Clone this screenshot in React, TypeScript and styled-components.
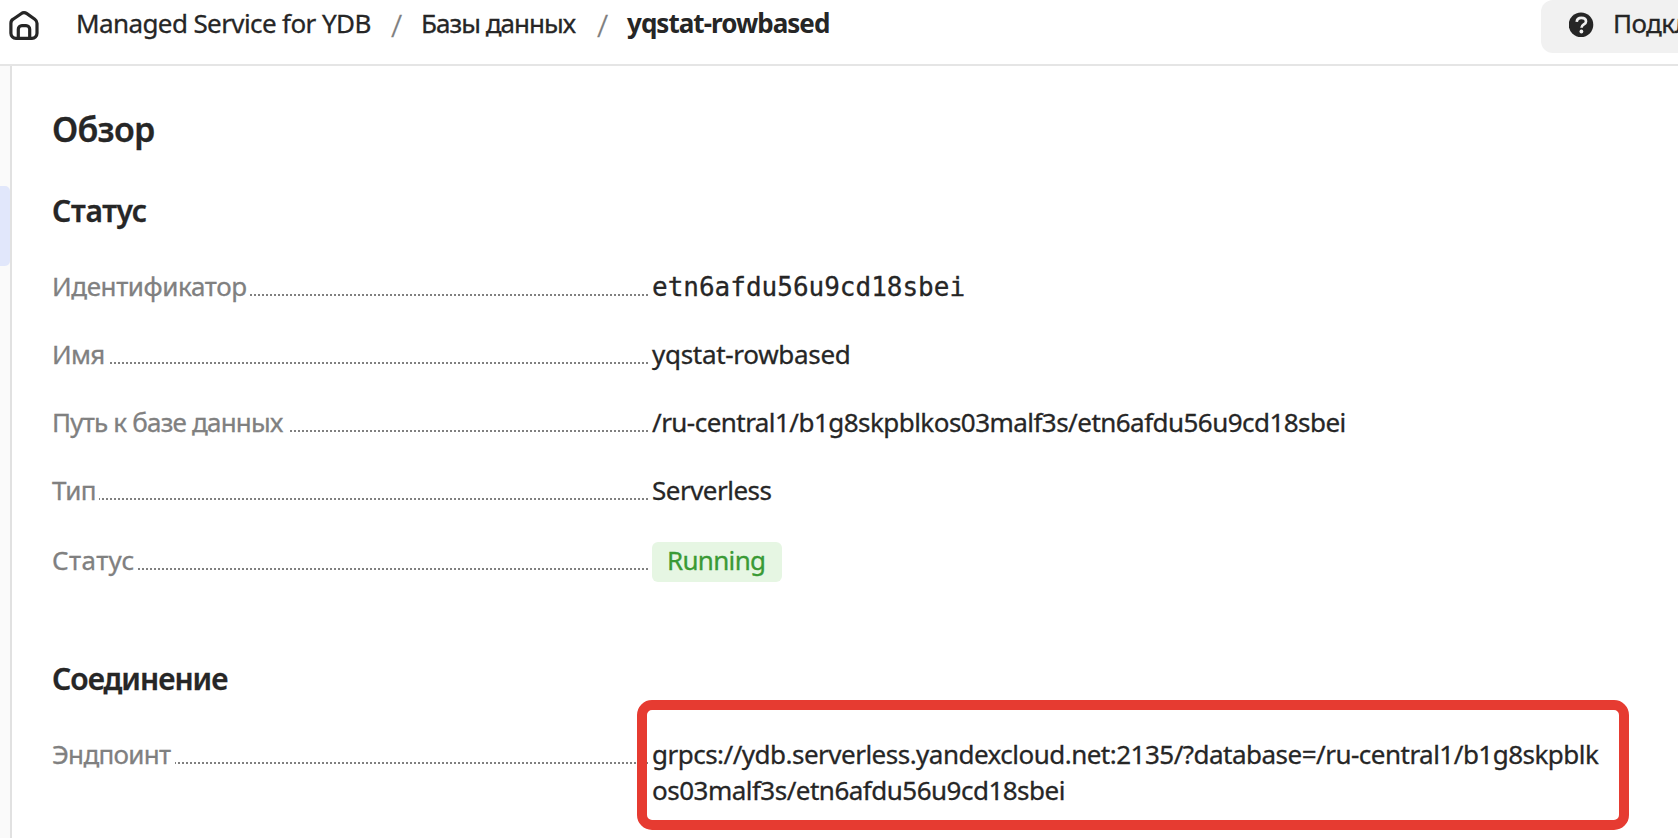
import React from 'react';
import styled, { createGlobalStyle } from 'styled-components';

const GlobalStyle = createGlobalStyle`
  * { box-sizing: border-box; }
  body {
    margin: 0;
    overflow: hidden;
    background: #fff;
    color: #262626;
    font-family: 'Noto Sans', 'Open Sans', sans-serif;
    font-size: 26px;
    line-height: 36px;
    -webkit-text-stroke: 0.3px currentColor;
  }
`;

const Page = styled.div`
  display: flex;
  flex-direction: column;
  height: 838px;
  overflow: hidden;
`;

const Header = styled.header`
  display: flex;
  flex: none;
  align-items: flex-start;
  justify-content: space-between;
  height: 66px;
  border-bottom: 2px solid #e5e5e5;
`;

const Breadcrumbs = styled.nav`
  display: flex;
  padding: 5px 0 0 8px;
  white-space: nowrap;
`;

const HomeIcon = styled.svg`
  flex: none;
  width: 32px;
  height: 32px;
  margin: 4px 36px 0 0;
`;

const Crumb = styled.span<{ $width?: number; $spacing: number; $current?: boolean }>`
  width: ${(p) => (p.$width ? `${p.$width}px` : 'auto')};
  font-weight: ${(p) => (p.$current ? 700 : 400)};
  letter-spacing: ${(p) => p.$spacing}px;
  -webkit-text-stroke-width: ${(p) => (p.$current ? 0 : 0.3)}px;
`;

const Divider = styled.span<{ $width: number }>`
  width: ${(p) => p.$width}px;
  padding: 2px 0 0 18px;
  color: #7d7d7d;
  font-size: 32px;
  font-weight: 300;
`;

const HelpButton = styled.button`
  display: flex;
  flex: none;
  width: 137px;
  height: 53px;
  padding: 5px 0 0 28px;
  border: 0;
  border-radius: 12px 0 0 12px;
  background: #f1f1f1;
  color: inherit;
  font: inherit;
  letter-spacing: -0.6px;
  text-align: left;
  white-space: nowrap;
`;

const HelpIcon = styled.svg`
  flex: none;
  width: 25px;
  height: 25px;
  margin: 7px 19px 0 0;
`;

const Body = styled.div`
  display: flex;
  flex: 1;
`;

const Sidebar = styled.aside`
  flex: none;
  width: 12px;
  padding-top: 120px;
  border-right: 2px solid #e1e1e1;
  background: #fafafa;
`;

const ActiveItem = styled.div`
  height: 80px;
  border-radius: 0 5px 5px 0;
  background: #e1e7fb;
`;

const Main = styled.main`
  flex: 1;
  padding: 43px 0 0 40px;
`;

const Title = styled.h1`
  margin: 0;
  font-size: 34px;
  font-weight: 600;
  letter-spacing: -0.75px;
  line-height: 40px;
`;

const Section = styled.section<{ $top: number }>`
  padding-top: ${(p) => p.$top}px;
`;

const SectionTitle = styled.h2<{ $spacing: number }>`
  margin: 0 0 39px;
  font-size: 30px;
  font-weight: 600;
  letter-spacing: ${(p) => p.$spacing}px;
  line-height: 36px;
`;

const List = styled.dl`
  display: flex;
  flex-direction: column;
  gap: 32px;
  margin: 0;
`;

const Row = styled.div<{ $offset?: number }>`
  display: flex;
  align-items: flex-start;
  padding-top: ${(p) => p.$offset ?? 0}px;
`;

const Term = styled.dt<{ $gap: number }>`
  display: flex;
  flex: none;
  gap: ${(p) => p.$gap}px;
  width: 596px;
  margin-right: 4px;
  color: #808080;
`;

const TermText = styled.span<{ $spacing: number }>`
  letter-spacing: ${(p) => p.$spacing}px;
  white-space: nowrap;
`;

const Dots = styled.span`
  flex: 1;
  height: 2px;
  margin-top: 26px;
  background: repeating-linear-gradient(to left, #808080 0 2px, transparent 2px 4px);
`;

const Value = styled.dd<{ $spacing?: number; $mono?: boolean }>`
  position: relative;
  width: 960px;
  height: ${(p) => (p.$mono ? '36px' : 'auto')};
  margin: 0;
  font-family: ${(p) => (p.$mono ? "'DejaVu Sans Mono', monospace" : 'inherit')};
  letter-spacing: ${(p) => p.$spacing ?? 0}px;
  line-height: ${(p) => (p.$mono ? 38 : 36)}px;
  white-space: nowrap;
`;

const StatusLabel = styled.span`
  display: block;
  width: 130px;
  height: 40px;
  padding-left: 15px;
  border-radius: 6px;
  background: #e6f6e3;
  color: #3a9a35;
`;

const Highlight = styled.div`
  position: absolute;
  top: -36px;
  left: -15px;
  width: 992px;
  height: 130px;
  border: 10px solid #e63b31;
  border-radius: 15px;
  pointer-events: none;
`;

type ItemProps = {
  term: string;
  termSpacing: number;
  gap: number;
  spacing?: number;
  mono?: boolean;
  offset?: number;
  children: React.ReactNode;
};

function Item({ term, termSpacing, gap, spacing, mono, offset, children }: ItemProps) {
  return (
    <Row $offset={offset}>
      <Term $gap={gap}>
        <TermText $spacing={termSpacing}>{term}</TermText>
        <Dots />
      </Term>
      <Value $spacing={spacing} $mono={mono}>{children}</Value>
    </Row>
  );
}

export default function App() {
  return (
    <Page>
      <GlobalStyle />
      <Header>
        <Breadcrumbs>
          <HomeIcon viewBox="0 0 32 32" fill="none" stroke="#262626" strokeWidth="3.2" strokeLinejoin="round">
            <path d="M2.900 13.900c0-1.700.8-3.200 2.200-4.100l8-5.500c1.800-1.200 4-1.200 5.800 0l7.900 5.500c1.400 1 2.200 2.500 2.200 4.100v10a5 5 0 0 1-5 5H7.900a5 5 0 0 1-5-5z" transform="translate(0 .4)" />
            <path d="M10.300 29V20.200a3.600 3.600 0 0 1 3.600-3.600h4.200a3.600 3.600 0 0 1 3.600 3.600V29" />
          </HomeIcon>
          <Crumb $width={297} $spacing={-0.6}>Managed Service for YDB</Crumb>
          <Divider $width={48}>/</Divider>
          <Crumb $width={158} $spacing={-0.97}>Базы данных</Crumb>
          <Divider $width={48}>/</Divider>
          <Crumb $spacing={-0.97} $current>yqstat-rowbased</Crumb>
        </Breadcrumbs>
        <HelpButton>
          <HelpIcon viewBox="0 0 25 25">
            <circle cx="12" cy="12.700" r="12.300" fill="#262626" />
            <path d="M7.700 9.800c.3-2.500 2-3.900 4.600-3.900 2.700 0 4.700 1.300 4.700 3.500 0 3.200-4.500 2.900-4.500 6.300" fill="none" stroke="#f1f1f1" strokeWidth="2.700" />
            <circle cx="12.400" cy="19.500" r="1.900" fill="#f1f1f1" />
          </HelpIcon>
          Подкл
        </HelpButton>
      </Header>
      <Body>
        <Sidebar>
          <ActiveItem />
        </Sidebar>
        <Main>
          <Title>Обзор</Title>
          <Section $top={44}>
            <SectionTitle $spacing={-0.3}>Статус</SectionTitle>
            <List>
              <Item term="Идентификатор" termSpacing={-0.4} gap={2} mono>etn6afdu56u9cd18sbei</Item>
              <Item term="Имя" termSpacing={-0.7} gap={3} spacing={-0.3}>yqstat-rowbased</Item>
              <Item term="Путь к базе данных" termSpacing={-0.8} gap={6} spacing={-0.54}>
                /ru-central1/b1g8skpblkos03malf3s/etn6afdu56u9cd18sbei
              </Item>
              <Item term="Тип" termSpacing={-0.5} gap={3} spacing={-0.51}>Serverless</Item>
              <Item term="Статус" termSpacing={0.4} gap={2} spacing={-0.69} offset={2}>
                <StatusLabel>Running</StatusLabel>
              </Item>
            </List>
          </Section>
          <Section $top={79}>
            <SectionTitle $spacing={-0.98}>Соединение</SectionTitle>
            <Item term="Эндпоинт" termSpacing={-0.7} gap={5} spacing={-0.513}>
              grpcs://ydb.serverless.yandexcloud.net:2135/?database=/ru-central1/b1g8skpblk
              <br />
              os03malf3s/etn6afdu56u9cd18sbei
              <Highlight />
            </Item>
          </Section>
        </Main>
      </Body>
    </Page>
  );
}
